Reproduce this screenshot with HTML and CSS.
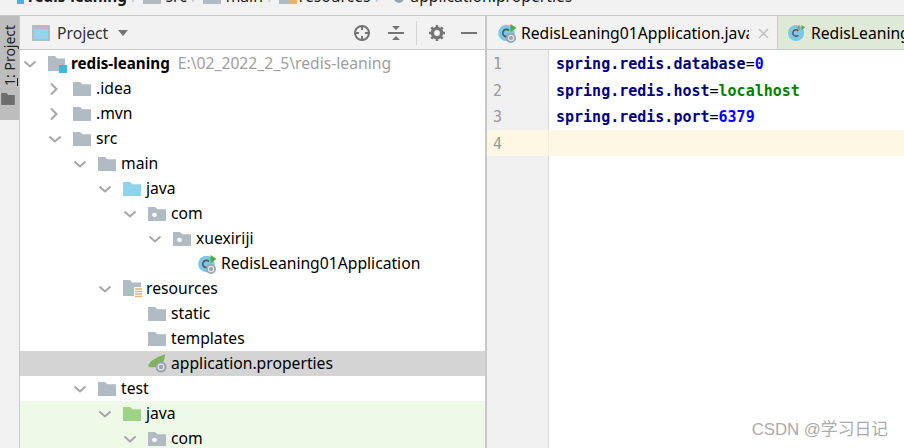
FILE: index.html
```html
<!DOCTYPE html>
<html lang="en">
<head>
<meta charset="utf-8">
<title>redis-leaning</title>
<link rel="stylesheet" href="styles.css">
</head>
<body>
<svg class="defs" width="0" height="0" aria-hidden="true">
  <symbol id="folder" viewBox="0 0 18 16" preserveAspectRatio="none"><path d="M0 0h7l2.500 2.500H18V16H0z" fill="#b0bbc3"/></symbol>
  <symbol id="folder-blue" viewBox="0 0 18 16" preserveAspectRatio="none"><path d="M0 0h7l2.500 2.500H18V16H0z" fill="#8ed3ee"/></symbol>
  <symbol id="folder-green" viewBox="0 0 18 16" preserveAspectRatio="none"><path d="M0 0h7l2.500 2.500H18V16H0z" fill="#9dd387"/></symbol>
  <symbol id="package" viewBox="0 0 18 16" preserveAspectRatio="none"><path d="M0 0h7l2.500 2.500H18V16H0z" fill="#b0bbc3"/><circle cx="6.500" cy="9" r="2.400" fill="#fff"/></symbol>
  <symbol id="chev-down" viewBox="0 0 14 14"><path d="M1.500 4.500l5.500 5 5.500-5" fill="none" stroke="#a6a6a6" stroke-width="2"/></symbol>
  <symbol id="chev-right" viewBox="0 0 14 14"><path d="M3 1.500l5.500 5.500-5.500 5.500" fill="none" stroke="#a6a6a6" stroke-width="2"/></symbol>
  <symbol id="spring-class" viewBox="0 0 20 20">
    <circle cx="8.500" cy="10" r="8.300" fill="#7dc8e6"/>
    <path d="M11 7.500a3.600 3.600 0 1 0 0 5" fill="none" stroke="#4a5a63" stroke-width="1.600"/>
    <path d="M12.500 1l6 4-6 4z" fill="#4fae3a"/>
    <circle cx="13" cy="15" r="5" fill="#9aa5ad"/>
    <circle cx="13" cy="15" r="2.600" fill="none" stroke="#dfe5e8" stroke-width="1.200"/>
  </symbol>
</svg>

<div class="crumbs">
  <span class="crumb"><svg class="crumb-icon" width="19" height="15" viewBox="0 0 19 15"><path d="M0 0h14v9H0z" fill="#b0bbc3"/><path d="M12 4h7v10h-7z" fill="#43b3e0"/></svg><b class="crumb-root">redis-leaning</b></span>
  <i class="sep">/</i>
  <span class="crumb"><svg class="crumb-icon" width="18" height="14"><use href="#folder"/></svg>src</span>
  <i class="sep">/</i>
  <span class="crumb"><svg class="crumb-icon" width="18" height="14"><use href="#folder"/></svg>main</span>
  <i class="sep">/</i>
  <span class="crumb"><svg class="crumb-icon crumb-icon-tight" width="18" height="14" viewBox="0 0 18 14"><path d="M0 0h18v14H0z" fill="#b0bbc3"/><path d="M11 3h7v11h-7z" fill="#e9b560"/></svg>resources</span>
  <i class="sep">/</i>
  <span class="crumb"><svg class="crumb-icon" width="19" height="14" viewBox="0 0 19 14"><path d="M0 9C1 4 8 1 13 0c0 6-3 9-8 9z" fill="#7fb45e"/><circle cx="13" cy="8" r="5" fill="#9aa5ad"/></svg>application.properties</span>
</div>

<div class="workspace">
  <aside class="stripe">
    <div class="stripe-tab">
      <span class="stripe-label"><u>1</u>: Project</span>
      <svg class="stripe-icon" width="14" height="12" viewBox="0 0 18 16"><path d="M0 0h7l2.500 2.500H18V16H0z" fill="#6e6e6e"/></svg>
    </div>
  </aside>

  <section class="panel">
    <header class="panel-head">
      <svg class="panel-glyph" width="18" height="16" viewBox="0 0 18 16"><path d="M0 0h18v16H0z" fill="#b2bcc3"/><path d="M2 4h14v10H2z" fill="#93d5f0"/></svg>
      <span class="panel-title">Project</span>
      <svg class="caret" width="10" height="6" viewBox="0 0 10 6"><path d="M0 0h10L5 6z" fill="#757575"/></svg>
      <span class="panel-tools">
        <svg width="18" height="18" viewBox="0 0 18 18"><circle cx="9" cy="9" r="7" fill="none" stroke="#757575" stroke-width="2"/><path d="M9 1v5M9 12v5M1 9h5M12 9h5" stroke="#757575" stroke-width="2"/></svg>
        <svg class="tool-collapse" width="16" height="16" viewBox="0 0 16 16"><path d="M0 8h16" stroke="#757575" stroke-width="2"/><path d="M4 1h8L8 5zM4 15h8L8 11z" fill="#757575"/></svg>
        <i class="tool-rule"></i>
        <svg width="16" height="16" viewBox="0 0 16 16"><circle cx="8" cy="8" r="4.600" fill="none" stroke="#757575" stroke-width="3.400"/><path d="M8 0v3M8 13v3M0 8h3M13 8h3M2.300 2.300l2.200 2.200M11.500 11.500l2.200 2.200M2.300 13.700l2.200-2.200M11.500 4.500l2.200-2.200" stroke="#757575" stroke-width="2.600"/></svg>
        <i class="tool-min"></i>
      </span>
    </header>

    <div class="tree">
      <div class="row l0"><svg class="arrow" width="14" height="14"><use href="#chev-down"/></svg><svg class="ico" width="19" height="18" viewBox="0 0 19 18"><path d="M0 1h7l2.500 2.500H17V16H0z" fill="#b0bbc3"/><path d="M11 10h8v8h-8z" fill="#43b3e0"/></svg><b class="name">redis-leaning</b><span class="path">E:\02_2022_2_5\redis-leaning</span></div>
      <div class="row l1"><svg class="arrow" width="14" height="14"><use href="#chev-right"/></svg><svg class="ico" width="18" height="14"><use href="#folder"/></svg><span class="name">.idea</span></div>
      <div class="row l1"><svg class="arrow" width="14" height="14"><use href="#chev-right"/></svg><svg class="ico" width="18" height="14"><use href="#folder"/></svg><span class="name">.mvn</span></div>
      <div class="row l1"><svg class="arrow" width="14" height="14"><use href="#chev-down"/></svg><svg class="ico" width="18" height="14"><use href="#folder"/></svg><span class="name">src</span></div>
      <div class="row l2"><svg class="arrow" width="14" height="14"><use href="#chev-down"/></svg><svg class="ico" width="18" height="14"><use href="#folder"/></svg><span class="name">main</span></div>
      <div class="row l3"><svg class="arrow" width="14" height="14"><use href="#chev-down"/></svg><svg class="ico" width="18" height="14"><use href="#folder-blue"/></svg><span class="name">java</span></div>
      <div class="row l4"><svg class="arrow" width="14" height="14"><use href="#chev-down"/></svg><svg class="ico" width="18" height="14"><use href="#package"/></svg><span class="name">com</span></div>
      <div class="row l5"><svg class="arrow" width="14" height="14"><use href="#chev-down"/></svg><svg class="ico" width="18" height="14"><use href="#package"/></svg><span class="name">xuexiriji</span></div>
      <div class="row l6"><span class="arrow"></span><svg class="ico ico-wide" width="20" height="20"><use href="#spring-class"/></svg><span class="name">RedisLeaning01Application</span></div>
      <div class="row l3"><svg class="arrow" width="14" height="14"><use href="#chev-down"/></svg><svg class="ico ico-wide" width="20" height="18" viewBox="0 0 20 18"><path d="M0 0h7l2.500 2.500H18V16H0z" fill="#b0bbc3"/><path d="M11 7h8v11h-8z" fill="#fff"/><path d="M12 9h7M12 11.500h7M12 14h7M12 16.500h7" stroke="#e9b560" stroke-width="1.300"/></svg><span class="name">resources</span></div>
      <div class="row l4"><span class="arrow"></span><svg class="ico" width="18" height="14"><use href="#folder"/></svg><span class="name">static</span></div>
      <div class="row l4"><span class="arrow"></span><svg class="ico" width="18" height="14"><use href="#folder"/></svg><span class="name">templates</span></div>
      <div class="row l4 selected"><span class="arrow"></span><svg class="ico ico-wide" width="20" height="19" viewBox="0 0 20 19"><path d="M0 12C2 6 10 3 17 0c0 8-4 13-10 13-3 0-5 1-7-1z" fill="#7fb45e"/><circle cx="13" cy="13" r="5.500" fill="#9aa5ad"/><circle cx="13" cy="13" r="2.800" fill="none" stroke="#e3e8ea" stroke-width="1.200"/></svg><span class="name">application.properties</span></div>
      <div class="row l2"><svg class="arrow" width="14" height="14"><use href="#chev-down"/></svg><svg class="ico" width="18" height="14"><use href="#folder"/></svg><span class="name">test</span></div>
      <div class="row l3 tested"><svg class="arrow" width="14" height="14"><use href="#chev-down"/></svg><svg class="ico" width="18" height="14"><use href="#folder-green"/></svg><span class="name">java</span></div>
      <div class="row l4 tested"><svg class="arrow" width="14" height="14"><use href="#chev-down"/></svg><svg class="ico" width="18" height="14"><use href="#package"/></svg><span class="name">com</span></div>
    </div>
  </section>

  <section class="editor">
    <nav class="tabs">
      <div class="tab tab-active">
        <svg class="tab-icon" width="20" height="20"><use href="#spring-class"/></svg>
        <span class="tab-text">RedisLeaning01Application.java</span>
        <svg class="tab-close" width="11" height="11" viewBox="0 0 11 11"><path d="M1 1l9 9M10 1l-9 9" stroke="#c0c0c0" stroke-width="1.500"/></svg>
      </div>
      <div class="tab tab-other">
        <svg class="tab-icon" width="18" height="18" viewBox="0 0 20 20"><circle cx="9" cy="10" r="9" fill="#7dc8e6"/><path d="M11.500 7.500a3.600 3.600 0 1 0 0 5" fill="none" stroke="#4a5a63" stroke-width="1.600"/><path d="M13 1l-3 3 3 3z" fill="#e2703a"/><path d="M15 1l4 3-4 3z" fill="#4fae3a"/></svg>
        <span class="tab-text">RedisLeaning01Application</span>
      </div>
    </nav>
    <div class="code">
      <div class="line"><span class="num">1</span><code><b class="key">spring.redis.database</b>=<b class="int">0</b></code></div>
      <div class="line"><span class="num">2</span><code><b class="key">spring.redis.host</b>=<b class="str">localhost</b></code></div>
      <div class="line"><span class="num">3</span><code><b class="key">spring.redis.port</b>=<b class="int">6379</b></code></div>
      <div class="line current"><span class="num">4</span><code></code></div>
      <div class="line filler"><span class="num"></span><code></code></div>
    </div>
  </section>
</div>

<div class="watermark">CSDN @学习日记</div>
</body>
</html>
```

FILE: styles.css
```css
* { box-sizing: border-box; }
html, body { margin: 0; height: 100%; }
body {
  width: 904px;
  height: 448px;
  overflow: hidden;
  display: flex;
  flex-direction: column;
  position: relative;
  background: #fff;
  color: #000;
  font: 15.700px/25px "Noto Sans", "Open Sans", sans-serif;
}
.defs { position: absolute; }

.crumbs {
  flex: 0 0 16px;
  display: flex;
  align-items: flex-end;
  padding: 0 0 9px 5px;
  background: #f2f2f2;
  border-bottom: 1px solid #c9c9c9;
  overflow: hidden;
  white-space: nowrap;
  color: #1a1a1a;
}
.crumb { display: flex; align-items: center; flex: none; height: 20px; line-height: 20px; }
.crumb-root { font-size: 15.200px; margin-left: -1px; }
.crumb-icon { margin-right: 5px; flex: none; margin-top: 2px; }
.crumb-icon-tight { margin-right: 2px; }
.sep { font-style: normal; color: #c4c4c4; padding: 0 5px; height: 20px; line-height: 20px; flex: none; }

.workspace { flex: 1; display: flex; min-height: 0; }

.stripe {
  flex: 0 0 20px;
  background: #f2f2f2;
  border-right: 1px solid #c9c9c9;
}
.stripe-tab {
  height: 104px;
  width: 19px;
  background: #bdbdbd;
  display: flex;
  flex-direction: column;
  align-items: center;
  padding-top: 8px;
}
.stripe-label {
  writing-mode: vertical-rl;
  transform: rotate(180deg);
  font-size: 14px;
  line-height: 19px;
  height: 62px;
  color: #222;
  white-space: nowrap;
}
.stripe-icon { margin-top: 7px; margin-left: -3px; }

.panel {
  flex: 0 0 467px;
  display: flex;
  flex-direction: column;
  border-right: 2px solid #c8c8c8;
  min-width: 0;
}
.panel-head {
  flex: 0 0 34px;
  display: flex;
  align-items: center;
  background: #f2f2f2;
  border-bottom: 1px solid #c9c9c9;
  padding: 1px 0 0 12px;
}
.panel-title { margin-left: 7px; color: #333; }
.caret { margin-left: 10px; }
.panel-tools { margin-left: auto; display: flex; align-items: center; padding-right: 8px; }
.tool-collapse { margin-left: 17px; }
.tool-rule { width: 1px; height: 24px; background: #d4d4d4; margin: 0 12px 0 12px; }
.tool-min { width: 16px; height: 2px; background: #757575; margin-left: 16px; }

.tree { padding-top: 1px; flex: 1; overflow: hidden; }
.row { display: flex; align-items: center; height: 25px; white-space: nowrap; }
.l0 { padding-left: 2px; }
.l1 { padding-left: 27px; }
.l2 { padding-left: 52px; }
.l3 { padding-left: 77px; }
.l4 { padding-left: 102px; }
.l5 { padding-left: 127px; }
.l6 { padding-left: 152px; }
.arrow { flex: 0 0 14px; margin-left: 1px; margin-right: 11px; }
.ico { flex: none; margin-right: 5px; }
.l0 .ico { margin-right: 4px; margin-left: 0; }
.ico-wide { margin-right: 3px; }
.name { flex: none; }
b.name { font-weight: 700; font-size: 15.200px; }
.path { margin-left: 8px; color: #9e9e9e; }
.selected { background: #d4d4d4; }
.tested { background: #eff9e7; }

.editor { flex: 1; display: flex; flex-direction: column; min-width: 0; }
.tabs {
  flex: 0 0 34px;
  display: flex;
  border-bottom: 1px solid #c9c9c9;
  overflow: hidden;
}
.tab { display: flex; align-items: center; flex: none; white-space: nowrap; padding-top: 1px; }
.tab-active {
  width: 291px;
  padding-left: 11px;
  background: #f2f2f2;
  border-right: 1px solid #c9c9c9;
}
.tab-other { padding-left: 10px; background: #dfe9d8; flex: 1; min-width: 0; overflow: hidden; }
.tab-icon { flex: none; margin-right: 3px; }
.tab-other .tab-icon { margin-right: 5px; }
.tab-active .tab-text { width: 228px; overflow: hidden; }
.tab-close { margin-left: 9px; flex: none; }

.code { flex: 1; display: flex; flex-direction: column; }
.line { display: flex; flex: 0 0 26.500px; height: 26.500px; min-height: 0; }
.num {
  flex: 0 0 62px;
  padding-left: 6px;
  background: #f0f0f0;
  border-right: 1px solid #d9d9d9;
  color: #999;
  font: 15px/29.500px "DejaVu Sans Mono", monospace;
}
code {
  flex: 1;
  padding-left: 7px;
  font: 15px/29.500px "DejaVu Sans Mono", monospace;
  color: #000;
}
.key { color: #000080; }
.str { color: #008000; }
.int { color: #0000ff; }
.current, .current .num { background: #fdf7e3; }
.current .num { border-right-color: #f5efdc; }
.filler { flex: 1; height: auto; }

.watermark {
  position: absolute;
  right: 16px;
  bottom: 6px;
  font: 16.800px/24px "Liberation Sans", "Noto Sans CJK SC", sans-serif;
  color: #ababab;
}
```
